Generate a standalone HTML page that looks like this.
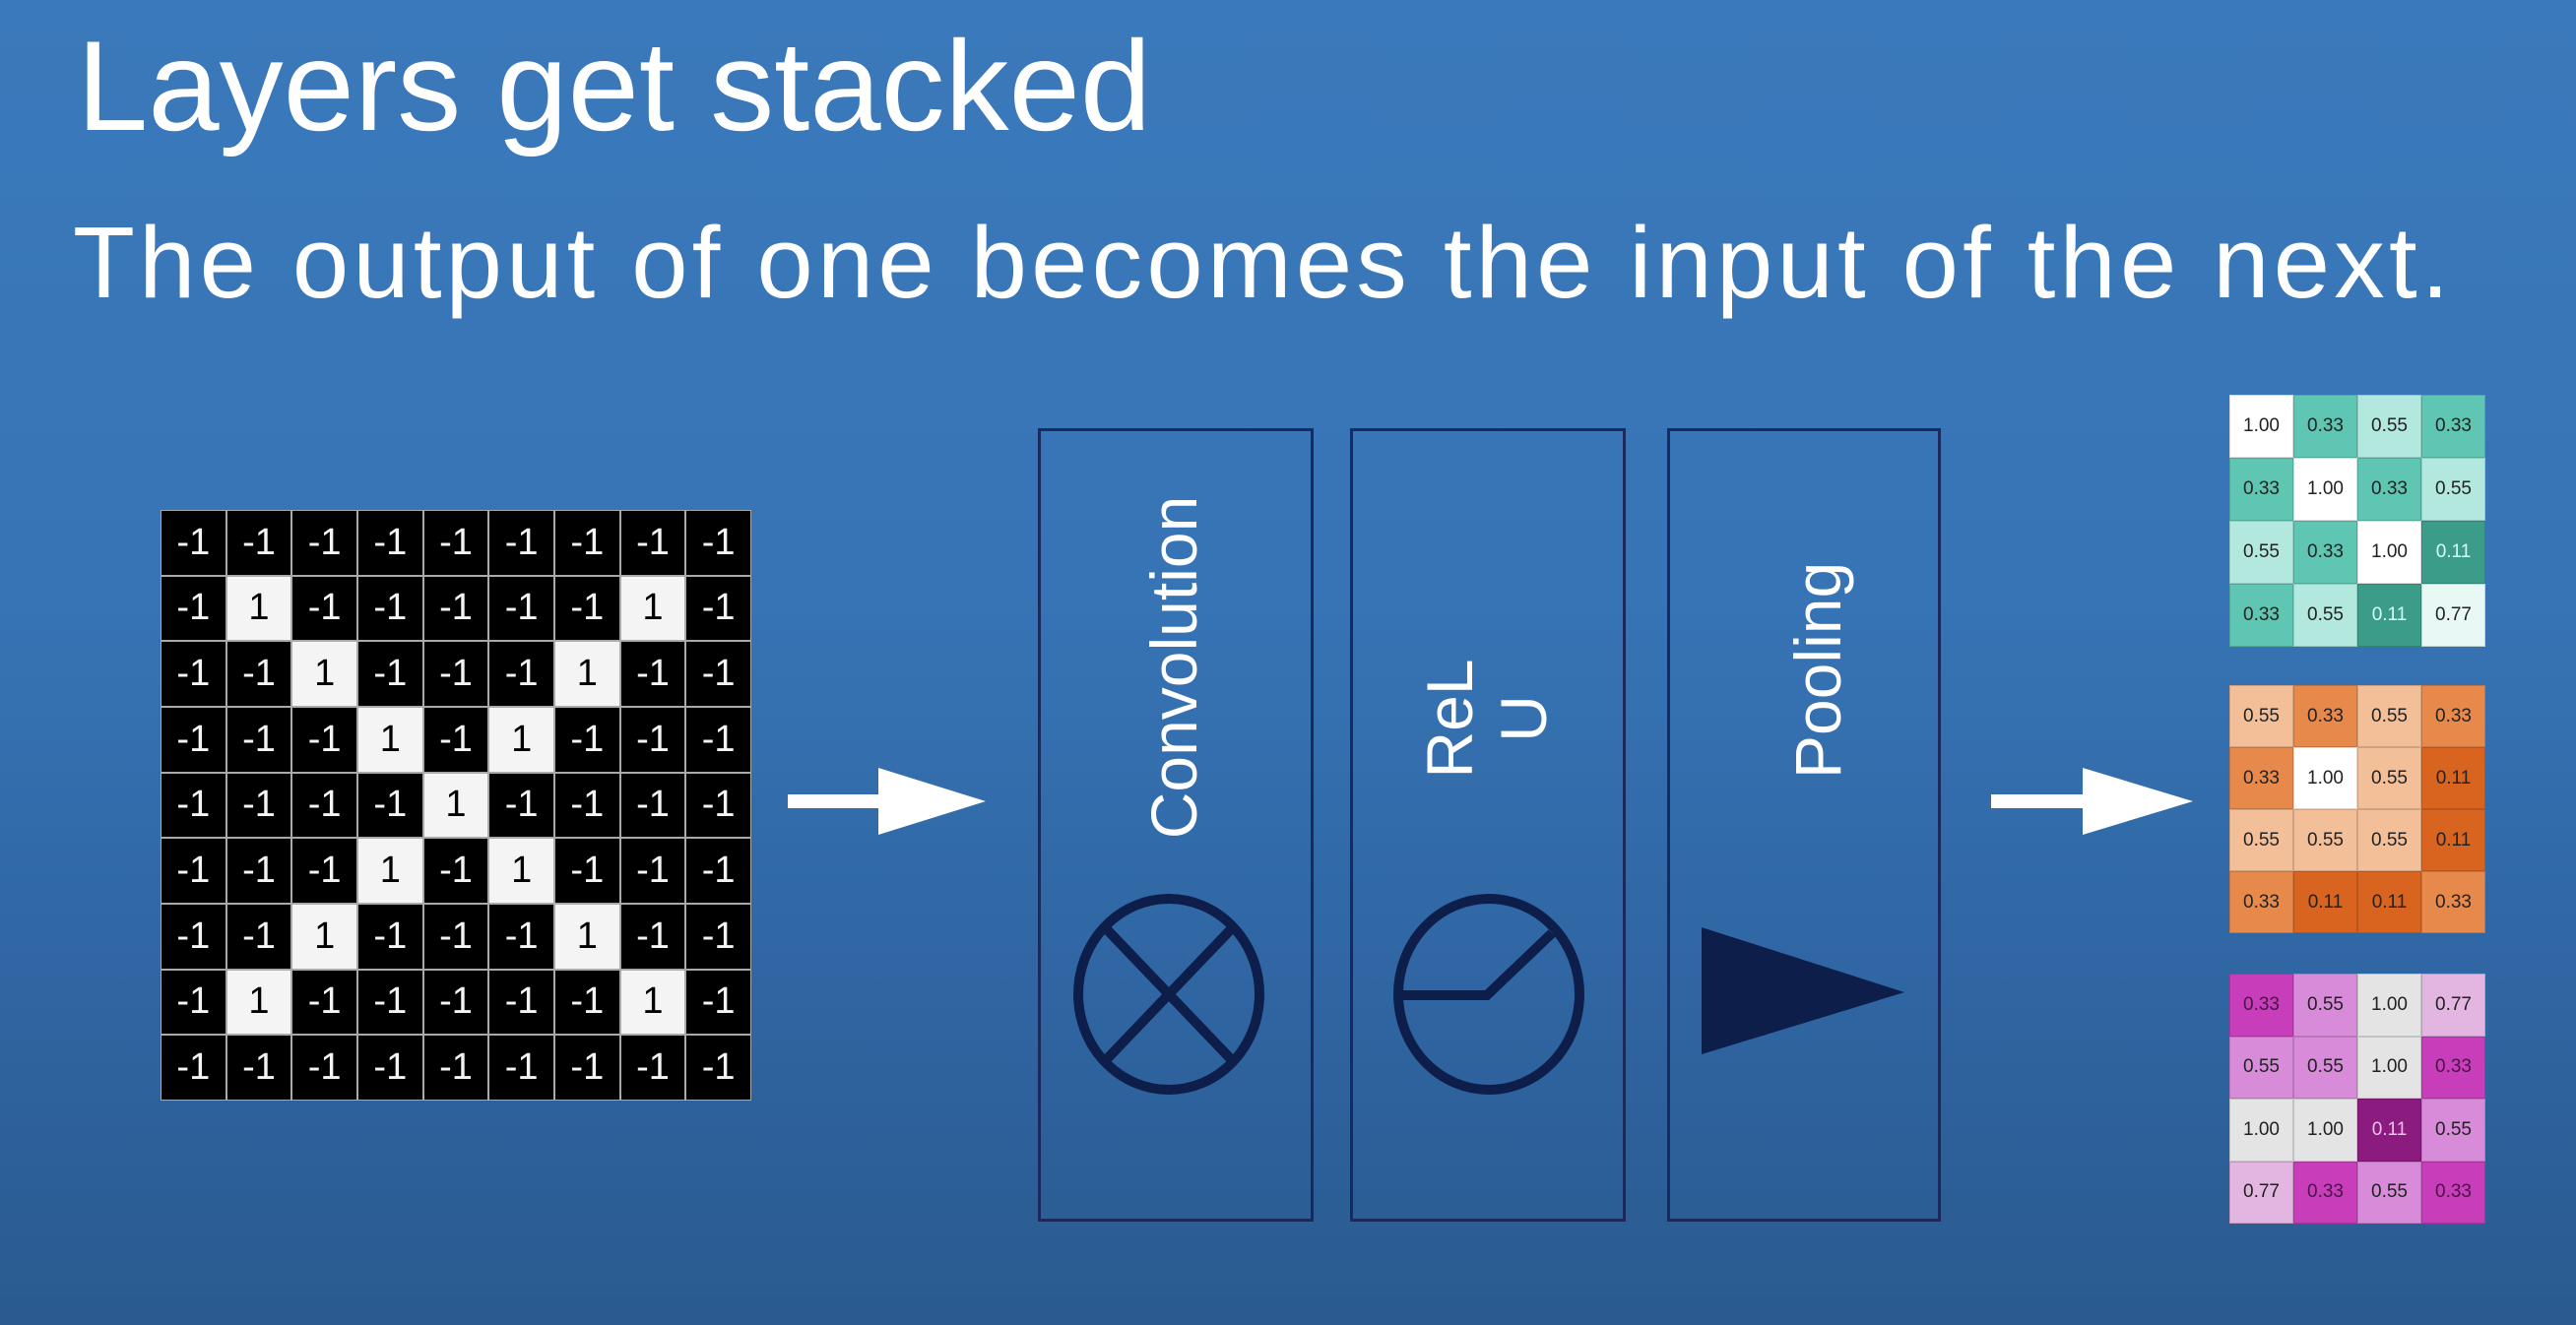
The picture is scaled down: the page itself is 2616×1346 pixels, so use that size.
<!DOCTYPE html>
<html><head><meta charset="utf-8"><style>
html,body{margin:0;padding:0}
body{width:2616px;height:1346px;overflow:hidden;position:relative;background:linear-gradient(180deg,#3a79bb 0%,#3774b5 45%,#2f65a2 75%,#2a5a8f 100%);font-family:"Liberation Sans",sans-serif;color:#fff}
.t{position:absolute;white-space:nowrap;line-height:1}
#grid{position:absolute;left:163px;top:518px;width:600px;height:600px;display:grid;grid-template-columns:repeat(9,1fr);grid-template-rows:repeat(9,1fr);background:#aaa;gap:2px;box-sizing:border-box;padding:1px}
#grid div{background:#000;color:#f4f4f4;font-size:38px;display:flex;align-items:center;justify-content:center}
#grid div.w{background:#f4f4f4;color:#000}
.tile{position:absolute;left:2264px;width:260px;display:grid;grid-template-columns:repeat(4,1fr);grid-template-rows:repeat(4,1fr)}
.tile div{display:flex;align-items:center;justify-content:center;font-size:19px;color:#222;box-shadow:inset 0 0 0 1px rgba(0,0,0,.15)}
.box{position:absolute;top:435px;height:806px;border:3px solid #1a2a5c;box-sizing:border-box}
.v{position:absolute;transform:rotate(-90deg);transform-origin:center;font-size:66px;white-space:nowrap;line-height:1;text-align:center}
</style></head><body>
<div class="t" style="left:78px;top:22px;font-size:130px">Layers get stacked</div>
<div class="t" style="left:74px;top:215px;font-size:103px;letter-spacing:4.2px">The output of one becomes the input of the next.</div>

<div id="grid"></div>

<div class="box" style="left:1054px;width:280px"></div>
<div class="box" style="left:1371px;width:280px"></div>
<div class="box" style="left:1693px;width:278px"></div>

<div class="v" style="left:1012px;top:645px;width:360px">Convolution</div>
<div class="v" style="left:1400px;top:655px;width:220px;line-height:75px">ReL<br>U</div>
<div class="v" style="left:1736px;top:648px;width:220px">Pooling</div>

<svg width="2616" height="1346" style="position:absolute;left:0;top:0">
<g fill="none" stroke="#0e1e4a" stroke-width="10">
<ellipse cx="1187" cy="1010" rx="92" ry="97"/>
<line x1="1122" y1="942" x2="1252" y2="1078"/>
<line x1="1252" y1="942" x2="1122" y2="1078"/>
<ellipse cx="1512" cy="1010" rx="92" ry="97"/>
<polyline points="1420,1011 1510,1011 1576,948"/>
</g>
<polygon points="1728,942 1934,1008 1728,1071" fill="#0e1e4a"/>
<g fill="#fff">
<rect x="800" y="807" width="95" height="14"/>
<polygon points="892,780 1001,814 892,848"/>
<rect x="2022" y="807" width="96" height="14"/>
<polygon points="2115,780 2227,814 2115,848"/>
</g>
</svg>

<div class="tile" id="t1" style="top:401px;height:256px"></div>
<div class="tile" id="t2" style="top:696px;height:252px"></div>
<div class="tile" id="t3" style="top:989px;height:254px"></div>

<script>
var g=document.getElementById('grid');
var X=[[1,1],[1,7],[2,2],[2,6],[3,3],[3,5],[4,4],[5,3],[5,5],[6,2],[6,6],[7,1],[7,7]];
for(var r=0;r<9;r++)for(var c=0;c<9;c++){var d=document.createElement('div');var w=X.some(function(p){return p[0]==r&&p[1]==c});if(w){d.className='w';d.textContent='1'}else d.textContent='-1';g.appendChild(d)}
function tile(id,vals,cols){var t=document.getElementById(id);vals.forEach(function(v){var d=document.createElement('div');d.textContent=v;var c=cols[v];d.style.background=c[0];if(c[1])d.style.color=c[1];t.appendChild(d)})}
var teal={'1.00':['#ffffff'],'0.33':['#5ec6b3'],'0.55':['#b3e8de'],'0.11':['#3b9c89','#d8fff8'],'0.77':['#e8f8f4']};
tile('t1',['1.00','0.33','0.55','0.33','0.33','1.00','0.33','0.55','0.55','0.33','1.00','0.11','0.33','0.55','0.11','0.77'],teal);
var or={'1.00':['#ffffff'],'0.33':['#e8894c'],'0.55':['#f2bf98'],'0.11':['#d8641f']};
tile('t2',['0.55','0.33','0.55','0.33','0.33','1.00','0.55','0.11','0.55','0.55','0.55','0.11','0.33','0.11','0.11','0.33'],or);
var mg={'1.00':['#e4e4e4'],'0.33':['#c73dba','#4a1445'],'0.55':['#d88bd9'],'0.11':['#8b1b7f','#f0c0ec'],'0.77':['#e2b6e0']};
tile('t3',['0.33','0.55','1.00','0.77','0.55','0.55','1.00','0.33','1.00','1.00','0.11','0.55','0.77','0.33','0.55','0.33'],mg);
</script>
</body></html>
